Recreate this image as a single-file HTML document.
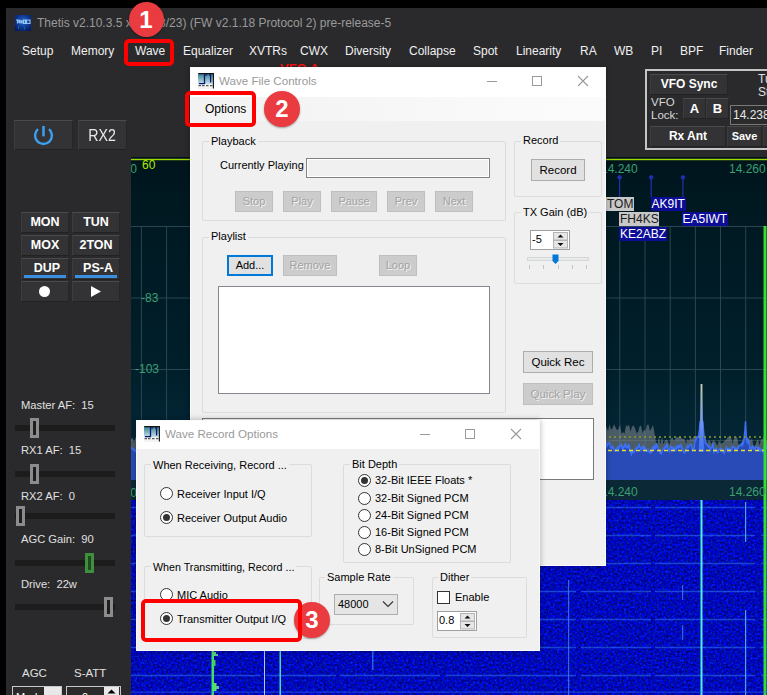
<!DOCTYPE html>
<html><head><meta charset="utf-8">
<style>
*{box-sizing:border-box}
html,body{margin:0;padding:0}
body{width:767px;height:695px;background:#000;position:relative;overflow:hidden;font-family:"Liberation Sans",sans-serif}
.a{position:absolute}
.w{color:#fff;white-space:nowrap}
.mn{position:absolute;top:43.5px;font-size:12px;color:#f0f0f0;white-space:nowrap;line-height:14px}
.btn{position:absolute;background:#333335;border-top:1px solid #4a4a4a;border-left:1px solid #3c3c3c;border-right:1px solid #262626;border-bottom:1px solid #222;color:#fff;font-weight:bold;font-size:12.5px;text-align:center;white-space:nowrap}
.lbl{position:absolute;color:#e0e0e0;font-size:11.2px;white-space:nowrap;line-height:14px}
.trk{position:absolute;left:15px;width:100px;height:6px;background:#1c1c1c}
.thm{position:absolute;width:9px;height:20px;background:#8c8c8c;border:3px solid #8c8c8c;border-left-width:3px;border-right-width:3px}
.thm i{display:block;width:3px;height:14px;background:#1e1e1e}
/* dialogs */
.dlg{position:absolute;background:#f0f0f0;border:1px solid #fafafa;box-shadow:0 0 6px rgba(0,0,0,.3)}
.dt{position:absolute;font-size:11.6px;color:#9a9a9a;white-space:nowrap}
.gb{position:absolute;border:1px solid #dcdcdc;border-radius:2px}
.gl{position:absolute;background:#f0f0f0;font-size:11px;color:#000;padding:0 2px;white-space:nowrap;line-height:13px}
.tx{position:absolute;font-size:11px;color:#000;white-space:nowrap;line-height:13px}
.pb{position:absolute;background:#e1e1e1;border:1px solid #adadad;font-size:11px;color:#000;text-align:center;white-space:nowrap}
.pbd{position:absolute;background:#cccccc;border:1px solid #bfbfbf;font-size:11px;color:#a3a3a3;text-align:center;white-space:nowrap;text-shadow:1px 1px 0 #f4f4f4}
.rd{position:absolute;width:13px;height:13px;border:1px solid #333;border-radius:50%;background:#fff}
.rd.on::after{content:"";position:absolute;left:2px;top:2px;width:7px;height:7px;border-radius:50%;background:#333}
.redbox{position:absolute;border:4px solid #ff0000;border-radius:5px}
.circ{position:absolute;width:36px;height:36px;border-radius:50%;background:#e93b40;color:#fff;font-weight:bold;font-size:24px;text-align:center;line-height:36px;box-shadow:0 1px 2px rgba(0,0,0,.35)}
</style></head>
<body>
<!-- main window -->
<div class="a" style="left:6px;top:8px;width:761px;height:687px;background:#2a2a2c"></div>
<!-- title icon -->
<svg class="a" style="left:15px;top:15px" width="16" height="16" viewBox="0 0 16 16"><defs><radialGradient id="tg" cx="0.5" cy="0.4" r="0.7"><stop offset="0" stop-color="#2a6ac8"/><stop offset="0.6" stop-color="#0c3490"/><stop offset="1" stop-color="#041a60"/></radialGradient></defs><rect width="16" height="16" fill="url(#tg)"/><path d="M1 5 H4 V8 M2.5 5 V8.5 M5 5 V8.5 M5 6.8 H7 M7 5 V8.5 M8.5 5 H10.5 V8.5 H8.5 Z M11.5 5 H15 V8.5 H11.5 Z" stroke="#9fd0ff" stroke-width="1.2" fill="none" opacity="0.9"/><rect x="3" y="11" width="1" height="3" fill="#2a8a6a" opacity=".6"/><rect x="9" y="12" width="1" height="2.5" fill="#2a8a6a" opacity=".6"/></svg>

<div class="a" style="left:37px;top:15px;font-size:12px;color:#9a9a9a;white-space:nowrap;line-height:16px">Thetis v2.10.3.5 x64 (08/23) (FW v2.1.18 Protocol 2) pre-release-5</div>
<!-- menu -->
<div class="mn" style="left:22px">Setup</div>
<div class="mn" style="left:71px">Memory</div>
<div class="mn" style="left:135px">Wave</div>
<div class="mn" style="left:183px">Equalizer</div>
<div class="mn" style="left:249px">XVTRs</div>
<div class="mn" style="left:300px">CWX</div>
<div class="mn" style="left:345px">Diversity</div>
<div class="mn" style="left:409px">Collapse</div>
<div class="mn" style="left:473px">Spot</div>
<div class="mn" style="left:516px">Linearity</div>
<div class="mn" style="left:580px">RA</div>
<div class="mn" style="left:614px">WB</div>
<div class="mn" style="left:651px">PI</div>
<div class="mn" style="left:680px">BPF</div>
<div class="mn" style="left:719px">Finder</div>

<!-- left panel buttons -->
<div class="btn" style="left:14px;top:120px;width:59px;height:30px"></div>
<svg class="a" style="left:32px;top:123px" width="23" height="23" viewBox="0 0 21 21"><path d="M5.45 5.6 A7.7 7.7 0 1 0 15.55 5.6" fill="none" stroke="#3c9ff0" stroke-width="2.2"/><line x1="10.5" y1="2.7" x2="10.5" y2="12.2" stroke="#3c9ff0" stroke-width="2.3"/></svg>
<div class="btn" style="left:78px;top:120px;width:49px;height:30px;font-weight:normal;font-size:16.5px;line-height:28px;color:#e8e8e8"><span style="display:inline-block;transform:scaleX(0.86)">RX2</span></div>

<div class="btn" style="left:21px;top:212px;width:48px;height:21px;line-height:19px">MON</div>
<div class="btn" style="left:72px;top:212px;width:48px;height:21px;line-height:19px">TUN</div>
<div class="btn" style="left:21px;top:235px;width:48px;height:21px;line-height:19px">MOX</div>
<div class="btn" style="left:72px;top:235px;width:48px;height:21px;line-height:19px">2TON</div>
<div class="btn" style="left:21px;top:258px;width:48px;height:22px;line-height:19px;padding-left:4px">DUP</div>
<div class="btn" style="left:72px;top:258px;width:48px;height:22px;line-height:19px;padding-left:4px">PS-A</div>
<div class="a" style="left:24px;top:275px;width:42px;height:3px;background:#3a8fe0"></div>
<div class="a" style="left:75px;top:275px;width:42px;height:3px;background:#3a8fe0"></div>
<div class="btn" style="left:21px;top:281px;width:48px;height:21px"></div>
<div class="btn" style="left:72px;top:281px;width:48px;height:21px"></div>
<div class="a" style="left:39px;top:286px;width:11px;height:11px;border-radius:50%;background:#fff"></div>
<svg class="a" style="left:90px;top:285px" width="12" height="13"><path d="M1 1 L11 6.5 L1 12 Z" fill="#fff"/></svg>

<!-- sliders -->
<div class="lbl" style="left:21px;top:398px">Master AF:&nbsp; 15</div>
<div class="trk" style="top:425px"></div>
<div class="thm" style="left:30px;top:418px"><i></i></div>
<div class="lbl" style="left:21px;top:443px">RX1 AF:&nbsp; 15</div>
<div class="trk" style="top:471px"></div>
<div class="thm" style="left:30px;top:464px"><i></i></div>
<div class="lbl" style="left:21px;top:489px">RX2 AF:&nbsp; 0</div>
<div class="trk" style="top:513px"></div>
<div class="thm" style="left:16px;top:506px"><i></i></div>
<div class="lbl" style="left:21px;top:532px">AGC Gain:&nbsp; 90</div>
<div class="trk" style="top:560px"></div>
<div class="thm" style="left:85px;top:553px;background:#3f8f3f;border-color:#3f8f3f"><i style="background:#1e4a1e"></i></div>
<div class="lbl" style="left:21px;top:577px">Drive:&nbsp; 22w</div>
<div class="trk" style="top:604px"></div>
<div class="thm" style="left:104px;top:597px"><i></i></div>
<div class="lbl" style="left:22px;top:666px;font-size:11.5px">AGC</div>
<div class="lbl" style="left:74px;top:666px;font-size:11.5px">S-ATT</div>
<div class="a" style="left:12px;top:686px;width:50px;height:12px;background:#e8e8e8;border:1px solid #c8c8c8"></div>
<div class="a" style="left:13px;top:687px;width:31px;height:10px;background:#2b2b2b;color:#fff;font-size:11px;line-height:20px;padding-left:3px;overflow:hidden">Mode</div>
<div class="a" style="left:66px;top:686px;width:55px;height:12px;background:#2b2b2b;border:1px solid #c8c8c8"></div>
<div class="a" style="left:82px;top:687px;color:#fff;font-size:11px;line-height:20px">0</div>
<div class="a" style="left:104px;top:687px;width:15px;height:10px;background:#e8e8e8"></div><svg class="a" style="left:106px;top:688px" width="11" height="6"><path d="M1.5 5.5 L5.5 1.5 L9.5 5.5Z" fill="#000"/></svg>

<!--vfo--><!-- VFO panel -->
<div class="a" style="left:645px;top:69px;width:130px;height:81px;border:2px solid #c4c4c4;border-right:none"></div>
<div class="btn" style="left:650px;top:74px;width:78px;height:21px;line-height:19px;font-size:12px">VFO Sync</div>
<div class="a" style="left:651px;top:96px;color:#d8d8d8;font-size:11.5px;line-height:13px;white-space:nowrap">VFO<br>Lock:</div>
<div class="btn" style="left:683px;top:98px;width:23px;height:21px;line-height:19px;font-size:13px">A</div>
<div class="btn" style="left:706px;top:98px;width:23px;height:21px;line-height:19px;font-size:13px">B</div>
<div class="a" style="left:730px;top:105px;width:40px;height:20px;background:#2b2b2b;border:1px solid #7a7a7a;border-right:none;color:#e8e8e8;font-size:12px;line-height:18px;padding-left:2px;white-space:nowrap;overflow:hidden">14.2380</div>
<div class="btn" style="left:650px;top:126px;width:76px;height:21px;line-height:19px;font-size:12px">Rx Ant</div>
<div class="btn" style="left:727px;top:126px;width:35px;height:21px;line-height:19px;font-size:11px">Save</div>
<div class="btn" style="left:763px;top:126px;width:10px;height:21px"></div>
<div class="a" style="left:758px;top:73px;color:#e0e0e0;font-size:12px;line-height:12.5px;white-space:nowrap">Tu<br>St</div>
<!--endvfo-->
<div id="pan"><div class="a" style="left:131px;top:157px;width:636px;height:323px;background:linear-gradient(#00141c,#001820 12%,#001f2b 65%,#062a3a 100%)"></div>
<div class="a" style="left:131px;top:480px;width:636px;height:20px;background:#0b2836"></div>
<svg class="a" style="left:0;top:0" width="767" height="695" viewBox="0 0 767 695">
<rect x="131" y="158.8" width="636" height="1.4" fill="#a0d800"/>
<rect x="131" y="226" width="636" height="1" fill="#2e4a56" opacity="0.9"/>
<rect x="131" y="297.5" width="636" height="1" fill="#2e4a56" opacity="0.9"/>
<rect x="131" y="369" width="636" height="1" fill="#2e4a56" opacity="0.9"/>
<rect x="131" y="440" width="636" height="1" fill="#2e4a56" opacity="0.9"/>
<rect x="140.9" y="226" width="1" height="254" fill="#2e4a56" opacity="0.9"/>
<rect x="166.1" y="226" width="1" height="254" fill="#2e4a56" opacity="0.9"/>
<rect x="191.3" y="226" width="1" height="254" fill="#2e4a56" opacity="0.9"/>
<rect x="216.4" y="226" width="1" height="254" fill="#2e4a56" opacity="0.9"/>
<rect x="241.6" y="226" width="1" height="254" fill="#2e4a56" opacity="0.9"/>
<rect x="266.8" y="226" width="1" height="254" fill="#2e4a56" opacity="0.9"/>
<rect x="292.0" y="226" width="1" height="254" fill="#2e4a56" opacity="0.9"/>
<rect x="317.2" y="226" width="1" height="254" fill="#2e4a56" opacity="0.9"/>
<rect x="342.3" y="226" width="1" height="254" fill="#2e4a56" opacity="0.9"/>
<rect x="367.5" y="226" width="1" height="254" fill="#2e4a56" opacity="0.9"/>
<rect x="392.7" y="226" width="1" height="254" fill="#2e4a56" opacity="0.9"/>
<rect x="417.9" y="226" width="1" height="254" fill="#2e4a56" opacity="0.9"/>
<rect x="443.1" y="226" width="1" height="254" fill="#2e4a56" opacity="0.9"/>
<rect x="468.2" y="226" width="1" height="254" fill="#2e4a56" opacity="0.9"/>
<rect x="493.4" y="226" width="1" height="254" fill="#2e4a56" opacity="0.9"/>
<rect x="518.6" y="226" width="1" height="254" fill="#2e4a56" opacity="0.9"/>
<rect x="543.8" y="226" width="1" height="254" fill="#2e4a56" opacity="0.9"/>
<rect x="569.0" y="226" width="1" height="254" fill="#2e4a56" opacity="0.9"/>
<rect x="594.1" y="226" width="1" height="254" fill="#2e4a56" opacity="0.9"/>
<rect x="619.3" y="226" width="1" height="254" fill="#2e4a56" opacity="0.9"/>
<rect x="644.5" y="226" width="1" height="254" fill="#2e4a56" opacity="0.9"/>
<rect x="669.7" y="226" width="1" height="254" fill="#2e4a56" opacity="0.9"/>
<rect x="694.9" y="226" width="1" height="254" fill="#2e4a56" opacity="0.9"/>
<rect x="720.0" y="226" width="1" height="254" fill="#2e4a56" opacity="0.9"/>
<rect x="745.2" y="226" width="1" height="254" fill="#2e4a56" opacity="0.9"/>
<path d="M131 480 L131 439.2 L132.5 437.5 L134.0 442.5 L135.5 436.7 L137.0 441.4 L138.5 439.7 L140.0 436.6 L141.5 441.1 L143.0 436.4 L144.5 440.3 L146.0 436.7 L147.5 436.9 L149.0 440.2 L150.5 444.3 L152.0 437.2 L153.5 438.2 L155.0 442.3 L156.5 445.5 L158.0 441.8 L159.5 440.0 L161.0 445.8 L162.5 436.5 L164.0 444.6 L165.5 438.9 L167.0 437.4 L168.5 437.2 L170.0 439.1 L171.5 444.2 L173.0 437.8 L174.5 441.8 L176.0 442.4 L177.5 439.7 L179.0 441.5 L180.5 436.6 L182.0 436.6 L183.5 438.1 L185.0 442.8 L186.5 440.3 L188.0 439.1 L189.5 441.9 L191.0 440.5 L192.5 439.0 L194.0 443.9 L195.5 443.0 L197.0 438.4 L198.5 441.7 L200.0 436.3 L201.5 439.8 L203.0 438.3 L204.5 433.9 L206.0 440.8 L207.5 432.2 L209.0 435.2 L210.5 438.6 L212.0 432.5 L213.5 435.9 L215.0 431.4 L216.5 437.7 L218.0 438.6 L219.5 436.7 L221.0 439.8 L222.5 434.1 L224.0 438.0 L225.5 436.9 L227.0 436.8 L228.5 435.6 L230.0 439.4 L231.5 440.4 L233.0 435.7 L234.5 437.6 L236.0 431.6 L237.5 438.0 L239.0 437.5 L240.5 440.9 L242.0 439.2 L243.5 433.8 L245.0 434.9 L246.5 437.7 L248.0 431.2 L249.5 435.6 L251.0 432.7 L252.5 432.2 L254.0 431.6 L255.5 438.7 L257.0 432.3 L258.5 433.5 L260.0 434.9 L261.5 439.7 L263.0 431.8 L264.5 435.5 L266.0 436.5 L267.5 439.8 L269.0 439.2 L270.5 439.6 L272.0 433.8 L273.5 435.2 L275.0 434.6 L276.5 439.8 L278.0 440.6 L279.5 432.5 L281.0 432.8 L282.5 433.3 L284.0 433.3 L285.5 435.8 L287.0 436.9 L288.5 433.6 L290.0 431.0 L291.5 435.2 L293.0 434.7 L294.5 436.7 L296.0 440.5 L297.5 437.9 L299.0 436.2 L300.5 437.2 L302.0 437.8 L303.5 431.5 L305.0 440.0 L306.5 438.8 L308.0 439.7 L309.5 439.0 L311.0 434.9 L312.5 435.0 L314.0 432.0 L315.5 437.3 L317.0 431.6 L318.5 431.7 L320.0 433.1 L321.5 432.6 L323.0 434.4 L324.5 431.5 L326.0 431.0 L327.5 432.5 L329.0 432.0 L330.5 434.6 L332.0 431.3 L333.5 439.7 L335.0 437.1 L336.5 432.5 L338.0 433.5 L339.5 434.5 L341.0 434.6 L342.5 432.2 L344.0 439.5 L345.5 440.9 L347.0 435.7 L348.5 435.8 L350.0 431.9 L351.5 432.0 L353.0 434.4 L354.5 433.6 L356.0 439.3 L357.5 432.6 L359.0 431.2 L360.5 440.5 L362.0 436.3 L363.5 432.5 L365.0 436.4 L366.5 431.3 L368.0 436.3 L369.5 440.8 L371.0 439.6 L372.5 438.0 L374.0 433.6 L375.5 434.7 L377.0 432.7 L378.5 438.7 L380.0 436.3 L381.5 438.8 L383.0 434.3 L384.5 433.2 L386.0 439.1 L387.5 440.8 L389.0 439.5 L390.5 439.1 L392.0 439.2 L393.5 438.4 L395.0 433.3 L396.5 436.2 L398.0 434.6 L399.5 431.3 L401.0 431.3 L402.5 433.8 L404.0 433.6 L405.5 437.9 L407.0 440.6 L408.5 435.5 L410.0 440.4 L411.5 440.9 L413.0 440.6 L414.5 434.6 L416.0 433.2 L417.5 433.3 L419.0 433.0 L420.5 433.0 L422.0 437.2 L423.5 440.0 L425.0 439.4 L426.5 435.8 L428.0 437.5 L429.5 439.0 L431.0 431.8 L432.5 437.6 L434.0 440.1 L435.5 438.8 L437.0 438.5 L438.5 435.8 L440.0 432.8 L441.5 438.9 L443.0 434.3 L444.5 439.0 L446.0 440.7 L447.5 435.0 L449.0 435.0 L450.5 440.5 L452.0 438.2 L453.5 432.7 L455.0 432.3 L456.5 432.5 L458.0 440.0 L459.5 439.1 L461.0 432.5 L462.5 439.3 L464.0 440.8 L465.5 437.6 L467.0 434.5 L468.5 436.5 L470.0 432.3 L471.5 431.1 L473.0 440.7 L474.5 437.5 L476.0 436.3 L477.5 440.3 L479.0 435.3 L480.5 439.7 L482.0 439.3 L483.5 433.1 L485.0 433.5 L486.5 433.9 L488.0 433.4 L489.5 436.9 L491.0 433.6 L492.5 435.2 L494.0 432.3 L495.5 440.1 L497.0 434.5 L498.5 435.6 L500.0 436.8 L501.5 440.0 L503.0 435.2 L504.5 440.2 L506.0 436.0 L507.5 436.3 L509.0 436.2 L510.5 431.2 L512.0 435.4 L513.5 432.8 L515.0 431.0 L516.5 439.0 L518.0 432.7 L519.5 435.7 L521.0 438.3 L522.5 436.6 L524.0 434.3 L525.5 436.2 L527.0 436.6 L528.5 438.8 L530.0 432.1 L531.5 436.6 L533.0 433.5 L534.5 433.8 L536.0 438.7 L537.5 436.1 L539.0 436.6 L540.5 438.6 L542.0 440.1 L543.5 435.4 L545.0 437.1 L546.5 436.1 L548.0 436.1 L549.5 437.9 L551.0 435.5 L552.5 436.3 L554.0 435.8 L555.5 440.4 L557.0 438.0 L558.5 439.8 L560.0 433.4 L561.5 426.6 L563.0 429.6 L564.5 433.4 L566.0 432.4 L567.5 425.4 L569.0 425.2 L570.5 428.4 L572.0 424.7 L573.5 426.4 L575.0 424.7 L576.5 430.7 L578.0 431.8 L579.5 433.0 L581.0 425.5 L582.5 431.2 L584.0 430.6 L585.5 425.4 L587.0 432.8 L588.5 433.7 L590.0 426.2 L591.5 433.5 L593.0 428.0 L594.5 428.9 L596.0 433.9 L597.5 432.3 L599.0 425.6 L600.5 428.3 L602.0 429.2 L603.5 427.4 L605.0 426.0 L606.5 427.2 L608.0 431.2 L609.5 424.2 L611.0 429.5 L612.5 428.4 L614.0 424.2 L615.5 427.3 L617.0 430.2 L618.5 429.1 L620.0 424.6 L621.5 433.9 L623.0 431.9 L624.5 433.7 L626.0 425.0 L627.5 426.7 L629.0 424.4 L630.5 431.8 L632.0 426.7 L633.5 425.3 L635.0 428.2 L636.5 433.1 L638.0 432.2 L639.5 426.6 L641.0 425.5 L642.5 433.2 L644.0 429.7 L645.5 431.0 L647.0 424.9 L648.5 424.6 L650.0 430.9 L651.5 428.3 L653.0 424.7 L654.5 433.4 L656.0 442.3 L657.5 444.0 L659.0 436.8 L660.5 444.6 L662.0 436.7 L663.5 444.6 L665.0 440.5 L666.5 439.4 L668.0 441.5 L669.5 445.3 L671.0 438.7 L672.5 437.3 L674.0 441.3 L675.5 438.4 L677.0 437.1 L678.5 437.6 L680.0 436.5 L681.5 438.0 L683.0 439.1 L684.5 439.1 L686.0 443.6 L687.5 438.9 L689.0 441.0 L690.5 437.8 L692.0 439.5 L693.5 436.2 L695.0 438.5 L696.5 436.2 L698.0 443.3 L699.5 441.5 L701.0 437.9 L702.5 440.7 L704.0 445.3 L705.5 437.1 L707.0 444.2 L708.5 440.3 L710.0 441.0 L711.5 444.3 L713.0 439.9 L714.5 441.1 L716.0 442.9 L717.5 445.8 L719.0 439.4 L720.5 444.3 L722.0 443.1 L723.5 442.4 L725.0 440.0 L726.5 439.5 L728.0 436.5 L729.5 437.3 L731.0 436.7 L732.5 443.4 L734.0 438.6 L735.5 437.6 L737.0 436.8 L738.5 444.4 L740.0 444.7 L741.5 442.7 L743.0 438.8 L744.5 438.4 L746.0 438.9 L747.5 440.6 L749.0 437.6 L750.5 440.5 L752.0 438.6 L753.5 445.6 L755.0 445.7 L756.5 441.5 L758.0 438.4 L759.5 445.7 L761.0 439.1 L762.5 439.6 L764.0 436.0 L765.5 439.8 L767.0 440.7 L767 480 Z" fill="#7a8288" opacity="0.6"/>
<path d="M131 480 L131.0 447.4 L131.5 447.8 L132.0 448.0 L132.5 449.3 L133.0 449.1 L133.5 449.4 L134.0 450.4 L134.5 450.6 L135.0 450.3 L135.5 452.1 L136.0 449.9 L136.5 448.6 L137.0 447.4 L137.5 445.6 L138.0 444.9 L138.5 446.0 L139.0 444.8 L139.5 448.9 L140.0 451.7 L140.5 452.4 L141.0 453.0 L141.5 454.3 L142.0 452.5 L142.5 449.2 L143.0 446.3 L143.5 445.1 L144.0 445.6 L144.5 443.7 L145.0 444.5 L145.5 445.6 L146.0 448.1 L146.5 446.0 L147.0 447.4 L147.5 447.3 L148.0 449.0 L148.5 446.7 L149.0 448.3 L149.5 446.8 L150.0 448.8 L150.5 447.5 L151.0 448.3 L151.5 449.0 L152.0 450.6 L152.5 448.7 L153.0 447.4 L153.5 446.5 L154.0 445.5 L154.5 443.5 L155.0 446.9 L155.5 448.1 L156.0 449.3 L156.5 448.5 L157.0 448.0 L157.5 445.5 L158.0 447.3 L158.5 448.1 L159.0 449.5 L159.5 451.7 L160.0 451.9 L160.5 452.0 L161.0 451.8 L161.5 453.7 L162.0 454.6 L162.5 454.5 L163.0 451.6 L163.5 452.0 L164.0 449.3 L164.5 446.0 L165.0 444.9 L165.5 444.8 L166.0 444.5 L166.5 445.6 L167.0 447.4 L167.5 450.7 L168.0 451.3 L168.5 452.2 L169.0 452.3 L169.5 452.4 L170.0 450.2 L170.5 452.5 L171.0 450.4 L171.5 448.3 L172.0 447.9 L172.5 449.5 L173.0 446.4 L173.5 447.3 L174.0 450.9 L174.5 453.0 L175.0 452.6 L175.5 457.1 L176.0 457.0 L176.5 455.0 L177.0 451.2 L177.5 450.7 L178.0 448.8 L178.5 448.4 L179.0 448.3 L179.5 451.3 L180.0 451.5 L180.5 450.0 L181.0 449.6 L181.5 449.4 L182.0 445.7 L182.5 444.4 L183.0 446.2 L183.5 448.4 L184.0 446.3 L184.5 449.1 L185.0 449.2 L185.5 446.9 L186.0 446.4 L186.5 448.1 L187.0 448.3 L187.5 448.6 L188.0 448.1 L188.5 447.0 L189.0 447.7 L189.5 448.2 L190.0 447.6 L190.5 449.8 L191.0 449.7 L191.5 449.9 L192.0 449.3 L192.5 447.6 L193.0 448.7 L193.5 450.5 L194.0 450.0 L194.5 447.5 L195.0 449.5 L195.5 448.6 L196.0 443.3 L196.5 446.6 L197.0 448.2 L197.5 447.9 L198.0 445.9 L198.5 449.7 L199.0 447.5 L199.5 448.6 L200.0 449.8 L200.5 449.8 L201.0 450.2 L201.5 449.3 L202.0 449.0 L202.5 449.9 L203.0 451.2 L203.5 451.4 L204.0 454.2 L204.5 453.7 L205.0 452.9 L205.5 450.9 L206.0 452.2 L206.5 448.4 L207.0 447.2 L207.5 446.0 L208.0 449.4 L208.5 447.6 L209.0 447.1 L209.5 449.6 L210.0 449.5 L210.5 446.9 L211.0 448.9 L211.5 451.7 L212.0 452.0 L212.5 453.6 L213.0 453.8 L213.5 452.0 L214.0 451.0 L214.5 446.8 L215.0 445.7 L215.5 448.0 L216.0 446.7 L216.5 448.3 L217.0 451.0 L217.5 451.6 L218.0 450.3 L218.5 451.5 L219.0 451.2 L219.5 451.0 L220.0 451.0 L220.5 453.1 L221.0 453.8 L221.5 452.6 L222.0 453.8 L222.5 454.0 L223.0 452.3 L223.5 451.6 L224.0 452.4 L224.5 452.3 L225.0 451.7 L225.5 452.3 L226.0 453.2 L226.5 451.2 L227.0 449.6 L227.5 450.4 L228.0 447.7 L228.5 446.0 L229.0 447.0 L229.5 448.5 L230.0 447.3 L230.5 451.5 L231.0 452.7 L231.5 453.9 L232.0 451.9 L232.5 450.7 L233.0 447.8 L233.5 447.8 L234.0 446.8 L234.5 449.6 L235.0 448.6 L235.5 449.3 L236.0 449.8 L236.5 447.8 L237.0 446.9 L237.5 449.8 L238.0 448.1 L238.5 444.3 L239.0 444.7 L239.5 444.6 L240.0 445.8 L240.5 446.4 L241.0 450.9 L241.5 451.5 L242.0 453.2 L242.5 449.5 L243.0 449.5 L243.5 448.0 L244.0 449.9 L244.5 449.1 L245.0 450.4 L245.5 447.8 L246.0 446.9 L246.5 444.4 L247.0 443.3 L247.5 443.2 L248.0 445.5 L248.5 445.7 L249.0 447.5 L249.5 446.6 L250.0 449.4 L250.5 448.9 L251.0 448.8 L251.5 449.2 L252.0 450.0 L252.5 450.2 L253.0 450.9 L253.5 450.5 L254.0 451.3 L254.5 451.9 L255.0 449.2 L255.5 448.8 L256.0 449.6 L256.5 449.9 L257.0 450.3 L257.5 451.4 L258.0 449.0 L258.5 449.5 L259.0 446.4 L259.5 443.4 L260.0 442.4 L260.5 445.5 L261.0 444.8 L261.5 449.4 L262.0 451.1 L262.5 451.0 L263.0 452.2 L263.5 452.4 L264.0 448.7 L264.5 447.9 L265.0 448.8 L265.5 449.2 L266.0 449.8 L266.5 450.0 L267.0 452.1 L267.5 452.5 L268.0 449.1 L268.5 449.2 L269.0 450.3 L269.5 451.2 L270.0 450.9 L270.5 451.1 L271.0 451.1 L271.5 453.4 L272.0 450.6 L272.5 452.7 L273.0 454.3 L273.5 454.2 L274.0 451.2 L274.5 451.1 L275.0 450.4 L275.5 449.8 L276.0 449.3 L276.5 450.0 L277.0 449.5 L277.5 449.0 L278.0 450.1 L278.5 449.6 L279.0 448.1 L279.5 450.2 L280.0 449.9 L280.5 449.2 L281.0 449.8 L281.5 450.6 L282.0 448.1 L282.5 449.0 L283.0 450.6 L283.5 448.9 L284.0 451.5 L284.5 453.5 L285.0 451.5 L285.5 450.7 L286.0 453.9 L286.5 450.3 L287.0 452.1 L287.5 452.8 L288.0 451.3 L288.5 450.3 L289.0 450.7 L289.5 449.6 L290.0 450.2 L290.5 451.1 L291.0 448.5 L291.5 451.3 L292.0 452.8 L292.5 454.0 L293.0 454.3 L293.5 457.2 L294.0 455.7 L294.5 451.5 L295.0 449.0 L295.5 448.9 L296.0 446.6 L296.5 445.9 L297.0 448.5 L297.5 448.5 L298.0 446.7 L298.5 449.7 L299.0 450.8 L299.5 450.3 L300.0 451.5 L300.5 451.3 L301.0 449.6 L301.5 448.5 L302.0 450.8 L302.5 451.0 L303.0 452.8 L303.5 454.5 L304.0 455.3 L304.5 452.2 L305.0 450.7 L305.5 453.8 L306.0 451.1 L306.5 449.6 L307.0 450.0 L307.5 449.4 L308.0 446.4 L308.5 447.2 L309.0 447.9 L309.5 445.5 L310.0 444.6 L310.5 442.5 L311.0 443.2 L311.5 443.3 L312.0 443.0 L312.5 445.4 L313.0 448.6 L313.5 447.4 L314.0 447.3 L314.5 451.5 L315.0 448.3 L315.5 447.3 L316.0 448.5 L316.5 450.5 L317.0 449.1 L317.5 449.6 L318.0 449.7 L318.5 447.2 L319.0 444.7 L319.5 445.8 L320.0 446.7 L320.5 448.1 L321.0 450.4 L321.5 451.3 L322.0 450.3 L322.5 450.8 L323.0 449.5 L323.5 448.9 L324.0 447.5 L324.5 447.2 L325.0 450.5 L325.5 449.9 L326.0 450.7 L326.5 451.7 L327.0 452.5 L327.5 450.3 L328.0 448.7 L328.5 447.8 L329.0 447.0 L329.5 446.9 L330.0 445.1 L330.5 447.9 L331.0 446.9 L331.5 446.0 L332.0 446.7 L332.5 446.7 L333.0 447.5 L333.5 450.0 L334.0 451.4 L334.5 451.9 L335.0 452.0 L335.5 451.7 L336.0 450.4 L336.5 451.7 L337.0 450.2 L337.5 452.3 L338.0 452.0 L338.5 450.7 L339.0 449.3 L339.5 450.3 L340.0 451.1 L340.5 449.8 L341.0 451.1 L341.5 453.8 L342.0 450.7 L342.5 446.2 L343.0 447.4 L343.5 447.9 L344.0 446.7 L344.5 446.8 L345.0 450.1 L345.5 448.8 L346.0 447.8 L346.5 447.5 L347.0 450.7 L347.5 453.4 L348.0 451.2 L348.5 450.0 L349.0 447.7 L349.5 448.3 L350.0 444.4 L350.5 447.1 L351.0 449.0 L351.5 447.8 L352.0 447.3 L352.5 449.2 L353.0 448.3 L353.5 447.2 L354.0 449.6 L354.5 448.8 L355.0 448.1 L355.5 449.6 L356.0 448.8 L356.5 448.2 L357.0 447.8 L357.5 447.7 L358.0 446.0 L358.5 449.0 L359.0 450.4 L359.5 451.3 L360.0 451.7 L360.5 454.6 L361.0 452.6 L361.5 452.1 L362.0 452.1 L362.5 452.2 L363.0 448.5 L363.5 448.4 L364.0 449.1 L364.5 448.5 L365.0 447.4 L365.5 447.9 L366.0 448.2 L366.5 448.6 L367.0 449.2 L367.5 449.3 L368.0 449.5 L368.5 449.2 L369.0 446.1 L369.5 446.3 L370.0 447.8 L370.5 448.8 L371.0 449.9 L371.5 453.8 L372.0 452.6 L372.5 451.6 L373.0 452.7 L373.5 451.3 L374.0 450.0 L374.5 448.8 L375.0 449.7 L375.5 447.8 L376.0 448.6 L376.5 448.3 L377.0 447.8 L377.5 446.2 L378.0 447.5 L378.5 447.2 L379.0 446.2 L379.5 447.0 L380.0 446.9 L380.5 446.4 L381.0 446.4 L381.5 448.6 L382.0 449.9 L382.5 450.4 L383.0 448.2 L383.5 448.6 L384.0 448.0 L384.5 447.3 L385.0 449.6 L385.5 453.8 L386.0 455.0 L386.5 454.0 L387.0 456.8 L387.5 455.7 L388.0 451.7 L388.5 452.0 L389.0 450.6 L389.5 446.4 L390.0 446.7 L390.5 450.4 L391.0 449.0 L391.5 451.8 L392.0 454.6 L392.5 451.6 L393.0 450.2 L393.5 450.7 L394.0 448.4 L394.5 447.9 L395.0 449.3 L395.5 449.4 L396.0 448.7 L396.5 451.8 L397.0 451.2 L397.5 451.4 L398.0 449.2 L398.5 448.4 L399.0 448.7 L399.5 448.9 L400.0 450.3 L400.5 453.3 L401.0 452.5 L401.5 449.7 L402.0 448.7 L402.5 448.7 L403.0 446.5 L403.5 447.5 L404.0 447.3 L404.5 446.6 L405.0 445.2 L405.5 446.4 L406.0 446.0 L406.5 445.8 L407.0 447.1 L407.5 449.3 L408.0 449.5 L408.5 449.2 L409.0 450.7 L409.5 451.8 L410.0 450.2 L410.5 450.4 L411.0 451.2 L411.5 450.9 L412.0 448.3 L412.5 448.3 L413.0 449.6 L413.5 450.5 L414.0 452.0 L414.5 454.3 L415.0 454.0 L415.5 450.9 L416.0 451.8 L416.5 450.6 L417.0 447.5 L417.5 449.3 L418.0 452.3 L418.5 452.7 L419.0 454.2 L419.5 456.3 L420.0 454.6 L420.5 452.3 L421.0 451.9 L421.5 449.8 L422.0 452.4 L422.5 451.4 L423.0 453.2 L423.5 453.6 L424.0 454.2 L424.5 451.4 L425.0 450.9 L425.5 451.5 L426.0 451.0 L426.5 452.8 L427.0 452.6 L427.5 456.0 L428.0 455.2 L428.5 455.0 L429.0 453.5 L429.5 453.5 L430.0 451.2 L430.5 451.7 L431.0 450.5 L431.5 450.1 L432.0 450.8 L432.5 451.5 L433.0 451.8 L433.5 451.2 L434.0 451.5 L434.5 450.7 L435.0 450.2 L435.5 448.0 L436.0 447.0 L436.5 446.1 L437.0 445.0 L437.5 446.7 L438.0 445.8 L438.5 447.0 L439.0 447.7 L439.5 448.9 L440.0 448.7 L440.5 450.1 L441.0 449.0 L441.5 449.9 L442.0 449.9 L442.5 451.9 L443.0 450.9 L443.5 452.1 L444.0 450.9 L444.5 449.9 L445.0 447.2 L445.5 450.0 L446.0 452.6 L446.5 453.1 L447.0 454.4 L447.5 455.2 L448.0 455.0 L448.5 452.8 L449.0 451.6 L449.5 450.7 L450.0 449.3 L450.5 447.7 L451.0 448.9 L451.5 450.7 L452.0 450.3 L452.5 450.6 L453.0 451.1 L453.5 449.7 L454.0 448.6 L454.5 451.7 L455.0 451.2 L455.5 450.7 L456.0 450.7 L456.5 450.9 L457.0 448.7 L457.5 449.2 L458.0 447.9 L458.5 447.4 L459.0 447.4 L459.5 449.6 L460.0 448.3 L460.5 449.7 L461.0 451.4 L461.5 450.6 L462.0 449.3 L462.5 450.3 L463.0 448.7 L463.5 446.0 L464.0 446.6 L464.5 445.1 L465.0 444.6 L465.5 446.4 L466.0 447.3 L466.5 445.8 L467.0 446.0 L467.5 447.4 L468.0 444.6 L468.5 446.5 L469.0 447.6 L469.5 447.7 L470.0 446.6 L470.5 449.1 L471.0 446.9 L471.5 446.7 L472.0 447.7 L472.5 447.8 L473.0 448.0 L473.5 449.1 L474.0 446.6 L474.5 445.7 L475.0 445.7 L475.5 446.3 L476.0 445.4 L476.5 447.2 L477.0 446.7 L477.5 444.5 L478.0 444.4 L478.5 446.4 L479.0 447.2 L479.5 448.9 L480.0 452.2 L480.5 450.4 L481.0 449.5 L481.5 449.5 L482.0 450.2 L482.5 447.0 L483.0 446.4 L483.5 446.8 L484.0 446.1 L484.5 445.3 L485.0 447.6 L485.5 450.1 L486.0 450.7 L486.5 451.8 L487.0 451.5 L487.5 449.0 L488.0 449.5 L488.5 446.9 L489.0 446.5 L489.5 448.0 L490.0 447.9 L490.5 447.7 L491.0 448.3 L491.5 448.3 L492.0 444.9 L492.5 444.4 L493.0 444.1 L493.5 447.4 L494.0 448.5 L494.5 450.5 L495.0 453.1 L495.5 454.6 L496.0 454.0 L496.5 452.4 L497.0 451.2 L497.5 453.2 L498.0 450.8 L498.5 449.7 L499.0 451.8 L499.5 452.0 L500.0 449.2 L500.5 448.0 L501.0 448.5 L501.5 446.9 L502.0 448.9 L502.5 447.9 L503.0 450.4 L503.5 448.0 L504.0 448.0 L504.5 445.4 L505.0 446.7 L505.5 446.7 L506.0 447.3 L506.5 447.3 L507.0 449.4 L507.5 449.3 L508.0 449.1 L508.5 449.5 L509.0 450.9 L509.5 449.8 L510.0 450.4 L510.5 450.0 L511.0 451.7 L511.5 451.2 L512.0 450.4 L512.5 448.9 L513.0 448.6 L513.5 446.4 L514.0 444.9 L514.5 445.6 L515.0 447.9 L515.5 445.9 L516.0 446.7 L516.5 447.3 L517.0 449.7 L517.5 446.9 L518.0 449.4 L518.5 448.9 L519.0 449.3 L519.5 448.1 L520.0 452.3 L520.5 452.3 L521.0 453.1 L521.5 451.4 L522.0 451.6 L522.5 447.8 L523.0 447.2 L523.5 447.1 L524.0 450.3 L524.5 450.7 L525.0 452.5 L525.5 453.7 L526.0 452.9 L526.5 451.4 L527.0 450.2 L527.5 450.8 L528.0 449.6 L528.5 448.7 L529.0 447.2 L529.5 450.1 L530.0 446.7 L530.5 446.9 L531.0 447.8 L531.5 449.0 L532.0 445.1 L532.5 448.1 L533.0 448.3 L533.5 447.4 L534.0 447.2 L534.5 446.9 L535.0 446.7 L535.5 448.9 L536.0 451.9 L536.5 453.5 L537.0 454.9 L537.5 454.5 L538.0 452.8 L538.5 452.8 L539.0 451.7 L539.5 451.7 L540.0 450.2 L540.5 449.7 L541.0 448.0 L541.5 447.2 L542.0 446.1 L542.5 447.5 L543.0 447.9 L543.5 446.8 L544.0 448.5 L544.5 449.3 L545.0 449.6 L545.5 451.0 L546.0 451.2 L546.5 450.3 L547.0 450.3 L547.5 449.5 L548.0 448.2 L548.5 446.9 L549.0 447.3 L549.5 446.0 L550.0 445.6 L550.5 446.2 L551.0 446.0 L551.5 447.1 L552.0 450.9 L552.5 453.0 L553.0 452.8 L553.5 454.9 L554.0 453.2 L554.5 453.6 L555.0 451.1 L555.5 450.3 L556.0 450.8 L556.5 450.5 L557.0 446.5 L557.5 448.0 L558.0 448.1 L558.5 445.4 L559.0 445.3 L559.5 445.9 L560.0 445.2 L560.5 445.7 L561.0 448.7 L561.5 447.9 L562.0 448.8 L562.5 448.4 L563.0 445.8 L563.5 445.6 L564.0 446.5 L564.5 446.3 L565.0 444.6 L565.5 447.1 L566.0 446.4 L566.5 447.7 L567.0 447.4 L567.5 451.6 L568.0 451.4 L568.5 450.8 L569.0 450.5 L569.5 451.8 L570.0 449.4 L570.5 450.3 L571.0 451.4 L571.5 451.8 L572.0 452.3 L572.5 456.0 L573.0 454.6 L573.5 453.5 L574.0 453.2 L574.5 451.8 L575.0 446.2 L575.5 448.6 L576.0 449.7 L576.5 447.3 L577.0 446.7 L577.5 449.5 L578.0 446.9 L578.5 445.9 L579.0 448.1 L579.5 450.0 L580.0 450.8 L580.5 451.5 L581.0 452.4 L581.5 450.3 L582.0 447.4 L582.5 446.2 L583.0 445.3 L583.5 445.0 L584.0 445.8 L584.5 446.8 L585.0 446.6 L585.5 444.7 L586.0 443.1 L586.5 444.7 L587.0 445.5 L587.5 444.4 L588.0 447.2 L588.5 450.6 L589.0 451.4 L589.5 450.0 L590.0 450.5 L590.5 448.0 L591.0 445.4 L591.5 442.3 L592.0 442.8 L592.5 443.8 L593.0 445.6 L593.5 446.0 L594.0 445.7 L594.5 447.7 L595.0 447.0 L595.5 445.8 L596.0 446.1 L596.5 449.2 L597.0 446.6 L597.5 447.5 L598.0 447.6 L598.5 448.6 L599.0 448.0 L599.5 449.3 L600.0 447.6 L600.5 447.4 L601.0 445.4 L601.5 445.6 L602.0 446.3 L602.5 447.4 L603.0 448.4 L603.5 449.3 L604.0 449.0 L604.5 445.8 L605.0 445.3 L605.5 446.0 L606.0 444.8 L606.5 443.6 L607.0 446.1 L607.5 445.2 L608.0 443.8 L608.5 443.4 L609.0 442.9 L609.5 443.0 L610.0 445.2 L610.5 446.4 L611.0 447.6 L611.5 447.8 L612.0 448.0 L612.5 446.6 L613.0 448.0 L613.5 448.3 L614.0 450.3 L614.5 450.6 L615.0 451.1 L615.5 450.1 L616.0 449.1 L616.5 448.8 L617.0 448.1 L617.5 447.2 L618.0 447.0 L618.5 449.0 L619.0 448.2 L619.5 445.7 L620.0 445.9 L620.5 445.9 L621.0 445.4 L621.5 444.4 L622.0 447.4 L622.5 448.9 L623.0 449.4 L623.5 446.8 L624.0 447.1 L624.5 445.9 L625.0 444.5 L625.5 443.8 L626.0 447.1 L626.5 447.7 L627.0 447.3 L627.5 446.4 L628.0 447.3 L628.5 444.9 L629.0 444.8 L629.5 447.7 L630.0 451.0 L630.5 452.0 L631.0 451.8 L631.5 454.1 L632.0 452.5 L632.5 452.1 L633.0 450.4 L633.5 453.1 L634.0 451.3 L634.5 451.5 L635.0 450.2 L635.5 449.2 L636.0 448.0 L636.5 449.0 L637.0 447.7 L637.5 448.0 L638.0 447.8 L638.5 446.4 L639.0 443.6 L639.5 447.0 L640.0 447.1 L640.5 447.9 L641.0 450.5 L641.5 449.9 L642.0 448.0 L642.5 447.1 L643.0 448.3 L643.5 445.5 L644.0 448.0 L644.5 447.9 L645.0 450.2 L645.5 448.9 L646.0 450.3 L646.5 450.7 L647.0 451.3 L647.5 450.3 L648.0 451.0 L648.5 449.9 L649.0 450.8 L649.5 452.4 L650.0 451.9 L650.5 451.0 L651.0 453.4 L651.5 450.8 L652.0 449.1 L652.5 447.1 L653.0 449.5 L653.5 446.9 L654.0 448.4 L654.5 447.4 L655.0 448.6 L655.5 445.5 L656.0 446.8 L656.5 445.1 L657.0 446.9 L657.5 446.4 L658.0 447.7 L658.5 448.6 L659.0 450.8 L659.5 450.7 L660.0 453.0 L660.5 453.6 L661.0 453.6 L661.5 453.8 L662.0 451.2 L662.5 450.0 L663.0 449.6 L663.5 448.6 L664.0 448.2 L664.5 448.6 L665.0 446.9 L665.5 446.2 L666.0 446.9 L666.5 445.2 L667.0 443.7 L667.5 446.8 L668.0 449.0 L668.5 449.1 L669.0 449.9 L669.5 452.4 L670.0 449.5 L670.5 446.8 L671.0 447.0 L671.5 446.8 L672.0 448.4 L672.5 449.6 L673.0 448.2 L673.5 447.5 L674.0 449.8 L674.5 448.8 L675.0 448.2 L675.5 450.0 L676.0 450.5 L676.5 447.7 L677.0 445.9 L677.5 446.9 L678.0 447.8 L678.5 446.2 L679.0 445.9 L679.5 447.9 L680.0 445.5 L680.5 444.7 L681.0 444.9 L681.5 448.2 L682.0 446.5 L682.5 449.5 L683.0 450.0 L683.5 452.0 L684.0 451.6 L684.5 452.5 L685.0 452.0 L685.5 451.1 L686.0 449.3 L686.5 448.5 L687.0 447.3 L687.5 446.1 L688.0 447.2 L688.5 447.3 L689.0 446.0 L689.5 445.0 L690.0 444.7 L690.5 444.4 L691.0 444.6 L691.5 445.1 L692.0 448.4 L692.5 451.2 L693.0 449.7 L693.5 448.5 L694.0 448.8 L694.5 445.0 L695.0 440.8 L695.5 440.7 L696.0 440.0 L696.5 437.4 L697.0 437.5 L697.5 436.6 L698.0 436.4 L698.5 437.0 L699.0 432.8 L699.5 429.4 L700.0 422.4 L700.5 421.0 L701.0 421.0 L701.5 421.0 L702.0 421.0 L702.5 421.0 L703.0 422.7 L703.5 430.9 L704.0 436.2 L704.5 436.8 L705.0 440.0 L705.5 444.2 L706.0 442.9 L706.5 443.9 L707.0 444.5 L707.5 445.8 L708.0 445.6 L708.5 446.7 L709.0 446.2 L709.5 447.8 L710.0 448.9 L710.5 450.2 L711.0 448.1 L711.5 447.3 L712.0 447.3 L712.5 445.8 L713.0 443.2 L713.5 447.5 L714.0 451.8 L714.5 450.7 L715.0 449.4 L715.5 450.8 L716.0 451.2 L716.5 449.1 L717.0 450.5 L717.5 452.4 L718.0 452.4 L718.5 451.0 L719.0 449.7 L719.5 449.0 L720.0 448.8 L720.5 448.6 L721.0 449.0 L721.5 448.8 L722.0 451.3 L722.5 451.0 L723.0 451.2 L723.5 452.7 L724.0 453.3 L724.5 451.8 L725.0 451.8 L725.5 449.9 L726.0 449.1 L726.5 447.4 L727.0 448.5 L727.5 449.1 L728.0 450.6 L728.5 448.2 L729.0 450.5 L729.5 448.7 L730.0 449.7 L730.5 449.6 L731.0 451.1 L731.5 450.3 L732.0 449.4 L732.5 445.7 L733.0 447.0 L733.5 447.3 L734.0 447.2 L734.5 447.8 L735.0 450.5 L735.5 448.5 L736.0 449.1 L736.5 449.6 L737.0 449.2 L737.5 447.7 L738.0 448.1 L738.5 446.4 L739.0 446.3 L739.5 446.3 L740.0 445.7 L740.5 444.6 L741.0 444.0 L741.5 444.0 L742.0 445.4 L742.5 443.2 L743.0 444.1 L743.5 442.4 L744.0 439.3 L744.5 434.4 L745.0 429.8 L745.5 421.3 L746.0 431.2 L746.5 439.6 L747.0 441.3 L747.5 439.7 L748.0 442.1 L748.5 440.9 L749.0 441.9 L749.5 446.0 L750.0 449.1 L750.5 447.7 L751.0 448.6 L751.5 447.7 L752.0 448.3 L752.5 446.2 L753.0 446.9 L753.5 448.0 L754.0 449.4 L754.5 448.9 L755.0 448.3 L755.5 447.2 L756.0 447.4 L756.5 447.3 L757.0 447.1 L757.5 447.1 L758.0 449.3 L758.5 447.9 L759.0 447.7 L759.5 449.0 L760.0 451.5 L760.5 448.7 L761.0 450.8 L761.5 450.6 L762.0 449.6 L762.5 449.8 L763.0 451.7 L763.5 450.0 L764.0 450.6 L764.5 446.5 L765.0 445.9 L765.5 447.3 L766.0 447.4 L766.5 446.2 L767.0 449.2 L767 480 Z" fill="#2549c0" opacity="0.9"/>
<path d="M131.0 447.4 L131.5 447.8 L132.0 448.0 L132.5 449.3 L133.0 449.1 L133.5 449.4 L134.0 450.4 L134.5 450.6 L135.0 450.3 L135.5 452.1 L136.0 449.9 L136.5 448.6 L137.0 447.4 L137.5 445.6 L138.0 444.9 L138.5 446.0 L139.0 444.8 L139.5 448.9 L140.0 451.7 L140.5 452.4 L141.0 453.0 L141.5 454.3 L142.0 452.5 L142.5 449.2 L143.0 446.3 L143.5 445.1 L144.0 445.6 L144.5 443.7 L145.0 444.5 L145.5 445.6 L146.0 448.1 L146.5 446.0 L147.0 447.4 L147.5 447.3 L148.0 449.0 L148.5 446.7 L149.0 448.3 L149.5 446.8 L150.0 448.8 L150.5 447.5 L151.0 448.3 L151.5 449.0 L152.0 450.6 L152.5 448.7 L153.0 447.4 L153.5 446.5 L154.0 445.5 L154.5 443.5 L155.0 446.9 L155.5 448.1 L156.0 449.3 L156.5 448.5 L157.0 448.0 L157.5 445.5 L158.0 447.3 L158.5 448.1 L159.0 449.5 L159.5 451.7 L160.0 451.9 L160.5 452.0 L161.0 451.8 L161.5 453.7 L162.0 454.6 L162.5 454.5 L163.0 451.6 L163.5 452.0 L164.0 449.3 L164.5 446.0 L165.0 444.9 L165.5 444.8 L166.0 444.5 L166.5 445.6 L167.0 447.4 L167.5 450.7 L168.0 451.3 L168.5 452.2 L169.0 452.3 L169.5 452.4 L170.0 450.2 L170.5 452.5 L171.0 450.4 L171.5 448.3 L172.0 447.9 L172.5 449.5 L173.0 446.4 L173.5 447.3 L174.0 450.9 L174.5 453.0 L175.0 452.6 L175.5 457.1 L176.0 457.0 L176.5 455.0 L177.0 451.2 L177.5 450.7 L178.0 448.8 L178.5 448.4 L179.0 448.3 L179.5 451.3 L180.0 451.5 L180.5 450.0 L181.0 449.6 L181.5 449.4 L182.0 445.7 L182.5 444.4 L183.0 446.2 L183.5 448.4 L184.0 446.3 L184.5 449.1 L185.0 449.2 L185.5 446.9 L186.0 446.4 L186.5 448.1 L187.0 448.3 L187.5 448.6 L188.0 448.1 L188.5 447.0 L189.0 447.7 L189.5 448.2 L190.0 447.6 L190.5 449.8 L191.0 449.7 L191.5 449.9 L192.0 449.3 L192.5 447.6 L193.0 448.7 L193.5 450.5 L194.0 450.0 L194.5 447.5 L195.0 449.5 L195.5 448.6 L196.0 443.3 L196.5 446.6 L197.0 448.2 L197.5 447.9 L198.0 445.9 L198.5 449.7 L199.0 447.5 L199.5 448.6 L200.0 449.8 L200.5 449.8 L201.0 450.2 L201.5 449.3 L202.0 449.0 L202.5 449.9 L203.0 451.2 L203.5 451.4 L204.0 454.2 L204.5 453.7 L205.0 452.9 L205.5 450.9 L206.0 452.2 L206.5 448.4 L207.0 447.2 L207.5 446.0 L208.0 449.4 L208.5 447.6 L209.0 447.1 L209.5 449.6 L210.0 449.5 L210.5 446.9 L211.0 448.9 L211.5 451.7 L212.0 452.0 L212.5 453.6 L213.0 453.8 L213.5 452.0 L214.0 451.0 L214.5 446.8 L215.0 445.7 L215.5 448.0 L216.0 446.7 L216.5 448.3 L217.0 451.0 L217.5 451.6 L218.0 450.3 L218.5 451.5 L219.0 451.2 L219.5 451.0 L220.0 451.0 L220.5 453.1 L221.0 453.8 L221.5 452.6 L222.0 453.8 L222.5 454.0 L223.0 452.3 L223.5 451.6 L224.0 452.4 L224.5 452.3 L225.0 451.7 L225.5 452.3 L226.0 453.2 L226.5 451.2 L227.0 449.6 L227.5 450.4 L228.0 447.7 L228.5 446.0 L229.0 447.0 L229.5 448.5 L230.0 447.3 L230.5 451.5 L231.0 452.7 L231.5 453.9 L232.0 451.9 L232.5 450.7 L233.0 447.8 L233.5 447.8 L234.0 446.8 L234.5 449.6 L235.0 448.6 L235.5 449.3 L236.0 449.8 L236.5 447.8 L237.0 446.9 L237.5 449.8 L238.0 448.1 L238.5 444.3 L239.0 444.7 L239.5 444.6 L240.0 445.8 L240.5 446.4 L241.0 450.9 L241.5 451.5 L242.0 453.2 L242.5 449.5 L243.0 449.5 L243.5 448.0 L244.0 449.9 L244.5 449.1 L245.0 450.4 L245.5 447.8 L246.0 446.9 L246.5 444.4 L247.0 443.3 L247.5 443.2 L248.0 445.5 L248.5 445.7 L249.0 447.5 L249.5 446.6 L250.0 449.4 L250.5 448.9 L251.0 448.8 L251.5 449.2 L252.0 450.0 L252.5 450.2 L253.0 450.9 L253.5 450.5 L254.0 451.3 L254.5 451.9 L255.0 449.2 L255.5 448.8 L256.0 449.6 L256.5 449.9 L257.0 450.3 L257.5 451.4 L258.0 449.0 L258.5 449.5 L259.0 446.4 L259.5 443.4 L260.0 442.4 L260.5 445.5 L261.0 444.8 L261.5 449.4 L262.0 451.1 L262.5 451.0 L263.0 452.2 L263.5 452.4 L264.0 448.7 L264.5 447.9 L265.0 448.8 L265.5 449.2 L266.0 449.8 L266.5 450.0 L267.0 452.1 L267.5 452.5 L268.0 449.1 L268.5 449.2 L269.0 450.3 L269.5 451.2 L270.0 450.9 L270.5 451.1 L271.0 451.1 L271.5 453.4 L272.0 450.6 L272.5 452.7 L273.0 454.3 L273.5 454.2 L274.0 451.2 L274.5 451.1 L275.0 450.4 L275.5 449.8 L276.0 449.3 L276.5 450.0 L277.0 449.5 L277.5 449.0 L278.0 450.1 L278.5 449.6 L279.0 448.1 L279.5 450.2 L280.0 449.9 L280.5 449.2 L281.0 449.8 L281.5 450.6 L282.0 448.1 L282.5 449.0 L283.0 450.6 L283.5 448.9 L284.0 451.5 L284.5 453.5 L285.0 451.5 L285.5 450.7 L286.0 453.9 L286.5 450.3 L287.0 452.1 L287.5 452.8 L288.0 451.3 L288.5 450.3 L289.0 450.7 L289.5 449.6 L290.0 450.2 L290.5 451.1 L291.0 448.5 L291.5 451.3 L292.0 452.8 L292.5 454.0 L293.0 454.3 L293.5 457.2 L294.0 455.7 L294.5 451.5 L295.0 449.0 L295.5 448.9 L296.0 446.6 L296.5 445.9 L297.0 448.5 L297.5 448.5 L298.0 446.7 L298.5 449.7 L299.0 450.8 L299.5 450.3 L300.0 451.5 L300.5 451.3 L301.0 449.6 L301.5 448.5 L302.0 450.8 L302.5 451.0 L303.0 452.8 L303.5 454.5 L304.0 455.3 L304.5 452.2 L305.0 450.7 L305.5 453.8 L306.0 451.1 L306.5 449.6 L307.0 450.0 L307.5 449.4 L308.0 446.4 L308.5 447.2 L309.0 447.9 L309.5 445.5 L310.0 444.6 L310.5 442.5 L311.0 443.2 L311.5 443.3 L312.0 443.0 L312.5 445.4 L313.0 448.6 L313.5 447.4 L314.0 447.3 L314.5 451.5 L315.0 448.3 L315.5 447.3 L316.0 448.5 L316.5 450.5 L317.0 449.1 L317.5 449.6 L318.0 449.7 L318.5 447.2 L319.0 444.7 L319.5 445.8 L320.0 446.7 L320.5 448.1 L321.0 450.4 L321.5 451.3 L322.0 450.3 L322.5 450.8 L323.0 449.5 L323.5 448.9 L324.0 447.5 L324.5 447.2 L325.0 450.5 L325.5 449.9 L326.0 450.7 L326.5 451.7 L327.0 452.5 L327.5 450.3 L328.0 448.7 L328.5 447.8 L329.0 447.0 L329.5 446.9 L330.0 445.1 L330.5 447.9 L331.0 446.9 L331.5 446.0 L332.0 446.7 L332.5 446.7 L333.0 447.5 L333.5 450.0 L334.0 451.4 L334.5 451.9 L335.0 452.0 L335.5 451.7 L336.0 450.4 L336.5 451.7 L337.0 450.2 L337.5 452.3 L338.0 452.0 L338.5 450.7 L339.0 449.3 L339.5 450.3 L340.0 451.1 L340.5 449.8 L341.0 451.1 L341.5 453.8 L342.0 450.7 L342.5 446.2 L343.0 447.4 L343.5 447.9 L344.0 446.7 L344.5 446.8 L345.0 450.1 L345.5 448.8 L346.0 447.8 L346.5 447.5 L347.0 450.7 L347.5 453.4 L348.0 451.2 L348.5 450.0 L349.0 447.7 L349.5 448.3 L350.0 444.4 L350.5 447.1 L351.0 449.0 L351.5 447.8 L352.0 447.3 L352.5 449.2 L353.0 448.3 L353.5 447.2 L354.0 449.6 L354.5 448.8 L355.0 448.1 L355.5 449.6 L356.0 448.8 L356.5 448.2 L357.0 447.8 L357.5 447.7 L358.0 446.0 L358.5 449.0 L359.0 450.4 L359.5 451.3 L360.0 451.7 L360.5 454.6 L361.0 452.6 L361.5 452.1 L362.0 452.1 L362.5 452.2 L363.0 448.5 L363.5 448.4 L364.0 449.1 L364.5 448.5 L365.0 447.4 L365.5 447.9 L366.0 448.2 L366.5 448.6 L367.0 449.2 L367.5 449.3 L368.0 449.5 L368.5 449.2 L369.0 446.1 L369.5 446.3 L370.0 447.8 L370.5 448.8 L371.0 449.9 L371.5 453.8 L372.0 452.6 L372.5 451.6 L373.0 452.7 L373.5 451.3 L374.0 450.0 L374.5 448.8 L375.0 449.7 L375.5 447.8 L376.0 448.6 L376.5 448.3 L377.0 447.8 L377.5 446.2 L378.0 447.5 L378.5 447.2 L379.0 446.2 L379.5 447.0 L380.0 446.9 L380.5 446.4 L381.0 446.4 L381.5 448.6 L382.0 449.9 L382.5 450.4 L383.0 448.2 L383.5 448.6 L384.0 448.0 L384.5 447.3 L385.0 449.6 L385.5 453.8 L386.0 455.0 L386.5 454.0 L387.0 456.8 L387.5 455.7 L388.0 451.7 L388.5 452.0 L389.0 450.6 L389.5 446.4 L390.0 446.7 L390.5 450.4 L391.0 449.0 L391.5 451.8 L392.0 454.6 L392.5 451.6 L393.0 450.2 L393.5 450.7 L394.0 448.4 L394.5 447.9 L395.0 449.3 L395.5 449.4 L396.0 448.7 L396.5 451.8 L397.0 451.2 L397.5 451.4 L398.0 449.2 L398.5 448.4 L399.0 448.7 L399.5 448.9 L400.0 450.3 L400.5 453.3 L401.0 452.5 L401.5 449.7 L402.0 448.7 L402.5 448.7 L403.0 446.5 L403.5 447.5 L404.0 447.3 L404.5 446.6 L405.0 445.2 L405.5 446.4 L406.0 446.0 L406.5 445.8 L407.0 447.1 L407.5 449.3 L408.0 449.5 L408.5 449.2 L409.0 450.7 L409.5 451.8 L410.0 450.2 L410.5 450.4 L411.0 451.2 L411.5 450.9 L412.0 448.3 L412.5 448.3 L413.0 449.6 L413.5 450.5 L414.0 452.0 L414.5 454.3 L415.0 454.0 L415.5 450.9 L416.0 451.8 L416.5 450.6 L417.0 447.5 L417.5 449.3 L418.0 452.3 L418.5 452.7 L419.0 454.2 L419.5 456.3 L420.0 454.6 L420.5 452.3 L421.0 451.9 L421.5 449.8 L422.0 452.4 L422.5 451.4 L423.0 453.2 L423.5 453.6 L424.0 454.2 L424.5 451.4 L425.0 450.9 L425.5 451.5 L426.0 451.0 L426.5 452.8 L427.0 452.6 L427.5 456.0 L428.0 455.2 L428.5 455.0 L429.0 453.5 L429.5 453.5 L430.0 451.2 L430.5 451.7 L431.0 450.5 L431.5 450.1 L432.0 450.8 L432.5 451.5 L433.0 451.8 L433.5 451.2 L434.0 451.5 L434.5 450.7 L435.0 450.2 L435.5 448.0 L436.0 447.0 L436.5 446.1 L437.0 445.0 L437.5 446.7 L438.0 445.8 L438.5 447.0 L439.0 447.7 L439.5 448.9 L440.0 448.7 L440.5 450.1 L441.0 449.0 L441.5 449.9 L442.0 449.9 L442.5 451.9 L443.0 450.9 L443.5 452.1 L444.0 450.9 L444.5 449.9 L445.0 447.2 L445.5 450.0 L446.0 452.6 L446.5 453.1 L447.0 454.4 L447.5 455.2 L448.0 455.0 L448.5 452.8 L449.0 451.6 L449.5 450.7 L450.0 449.3 L450.5 447.7 L451.0 448.9 L451.5 450.7 L452.0 450.3 L452.5 450.6 L453.0 451.1 L453.5 449.7 L454.0 448.6 L454.5 451.7 L455.0 451.2 L455.5 450.7 L456.0 450.7 L456.5 450.9 L457.0 448.7 L457.5 449.2 L458.0 447.9 L458.5 447.4 L459.0 447.4 L459.5 449.6 L460.0 448.3 L460.5 449.7 L461.0 451.4 L461.5 450.6 L462.0 449.3 L462.5 450.3 L463.0 448.7 L463.5 446.0 L464.0 446.6 L464.5 445.1 L465.0 444.6 L465.5 446.4 L466.0 447.3 L466.5 445.8 L467.0 446.0 L467.5 447.4 L468.0 444.6 L468.5 446.5 L469.0 447.6 L469.5 447.7 L470.0 446.6 L470.5 449.1 L471.0 446.9 L471.5 446.7 L472.0 447.7 L472.5 447.8 L473.0 448.0 L473.5 449.1 L474.0 446.6 L474.5 445.7 L475.0 445.7 L475.5 446.3 L476.0 445.4 L476.5 447.2 L477.0 446.7 L477.5 444.5 L478.0 444.4 L478.5 446.4 L479.0 447.2 L479.5 448.9 L480.0 452.2 L480.5 450.4 L481.0 449.5 L481.5 449.5 L482.0 450.2 L482.5 447.0 L483.0 446.4 L483.5 446.8 L484.0 446.1 L484.5 445.3 L485.0 447.6 L485.5 450.1 L486.0 450.7 L486.5 451.8 L487.0 451.5 L487.5 449.0 L488.0 449.5 L488.5 446.9 L489.0 446.5 L489.5 448.0 L490.0 447.9 L490.5 447.7 L491.0 448.3 L491.5 448.3 L492.0 444.9 L492.5 444.4 L493.0 444.1 L493.5 447.4 L494.0 448.5 L494.5 450.5 L495.0 453.1 L495.5 454.6 L496.0 454.0 L496.5 452.4 L497.0 451.2 L497.5 453.2 L498.0 450.8 L498.5 449.7 L499.0 451.8 L499.5 452.0 L500.0 449.2 L500.5 448.0 L501.0 448.5 L501.5 446.9 L502.0 448.9 L502.5 447.9 L503.0 450.4 L503.5 448.0 L504.0 448.0 L504.5 445.4 L505.0 446.7 L505.5 446.7 L506.0 447.3 L506.5 447.3 L507.0 449.4 L507.5 449.3 L508.0 449.1 L508.5 449.5 L509.0 450.9 L509.5 449.8 L510.0 450.4 L510.5 450.0 L511.0 451.7 L511.5 451.2 L512.0 450.4 L512.5 448.9 L513.0 448.6 L513.5 446.4 L514.0 444.9 L514.5 445.6 L515.0 447.9 L515.5 445.9 L516.0 446.7 L516.5 447.3 L517.0 449.7 L517.5 446.9 L518.0 449.4 L518.5 448.9 L519.0 449.3 L519.5 448.1 L520.0 452.3 L520.5 452.3 L521.0 453.1 L521.5 451.4 L522.0 451.6 L522.5 447.8 L523.0 447.2 L523.5 447.1 L524.0 450.3 L524.5 450.7 L525.0 452.5 L525.5 453.7 L526.0 452.9 L526.5 451.4 L527.0 450.2 L527.5 450.8 L528.0 449.6 L528.5 448.7 L529.0 447.2 L529.5 450.1 L530.0 446.7 L530.5 446.9 L531.0 447.8 L531.5 449.0 L532.0 445.1 L532.5 448.1 L533.0 448.3 L533.5 447.4 L534.0 447.2 L534.5 446.9 L535.0 446.7 L535.5 448.9 L536.0 451.9 L536.5 453.5 L537.0 454.9 L537.5 454.5 L538.0 452.8 L538.5 452.8 L539.0 451.7 L539.5 451.7 L540.0 450.2 L540.5 449.7 L541.0 448.0 L541.5 447.2 L542.0 446.1 L542.5 447.5 L543.0 447.9 L543.5 446.8 L544.0 448.5 L544.5 449.3 L545.0 449.6 L545.5 451.0 L546.0 451.2 L546.5 450.3 L547.0 450.3 L547.5 449.5 L548.0 448.2 L548.5 446.9 L549.0 447.3 L549.5 446.0 L550.0 445.6 L550.5 446.2 L551.0 446.0 L551.5 447.1 L552.0 450.9 L552.5 453.0 L553.0 452.8 L553.5 454.9 L554.0 453.2 L554.5 453.6 L555.0 451.1 L555.5 450.3 L556.0 450.8 L556.5 450.5 L557.0 446.5 L557.5 448.0 L558.0 448.1 L558.5 445.4 L559.0 445.3 L559.5 445.9 L560.0 445.2 L560.5 445.7 L561.0 448.7 L561.5 447.9 L562.0 448.8 L562.5 448.4 L563.0 445.8 L563.5 445.6 L564.0 446.5 L564.5 446.3 L565.0 444.6 L565.5 447.1 L566.0 446.4 L566.5 447.7 L567.0 447.4 L567.5 451.6 L568.0 451.4 L568.5 450.8 L569.0 450.5 L569.5 451.8 L570.0 449.4 L570.5 450.3 L571.0 451.4 L571.5 451.8 L572.0 452.3 L572.5 456.0 L573.0 454.6 L573.5 453.5 L574.0 453.2 L574.5 451.8 L575.0 446.2 L575.5 448.6 L576.0 449.7 L576.5 447.3 L577.0 446.7 L577.5 449.5 L578.0 446.9 L578.5 445.9 L579.0 448.1 L579.5 450.0 L580.0 450.8 L580.5 451.5 L581.0 452.4 L581.5 450.3 L582.0 447.4 L582.5 446.2 L583.0 445.3 L583.5 445.0 L584.0 445.8 L584.5 446.8 L585.0 446.6 L585.5 444.7 L586.0 443.1 L586.5 444.7 L587.0 445.5 L587.5 444.4 L588.0 447.2 L588.5 450.6 L589.0 451.4 L589.5 450.0 L590.0 450.5 L590.5 448.0 L591.0 445.4 L591.5 442.3 L592.0 442.8 L592.5 443.8 L593.0 445.6 L593.5 446.0 L594.0 445.7 L594.5 447.7 L595.0 447.0 L595.5 445.8 L596.0 446.1 L596.5 449.2 L597.0 446.6 L597.5 447.5 L598.0 447.6 L598.5 448.6 L599.0 448.0 L599.5 449.3 L600.0 447.6 L600.5 447.4 L601.0 445.4 L601.5 445.6 L602.0 446.3 L602.5 447.4 L603.0 448.4 L603.5 449.3 L604.0 449.0 L604.5 445.8 L605.0 445.3 L605.5 446.0 L606.0 444.8 L606.5 443.6 L607.0 446.1 L607.5 445.2 L608.0 443.8 L608.5 443.4 L609.0 442.9 L609.5 443.0 L610.0 445.2 L610.5 446.4 L611.0 447.6 L611.5 447.8 L612.0 448.0 L612.5 446.6 L613.0 448.0 L613.5 448.3 L614.0 450.3 L614.5 450.6 L615.0 451.1 L615.5 450.1 L616.0 449.1 L616.5 448.8 L617.0 448.1 L617.5 447.2 L618.0 447.0 L618.5 449.0 L619.0 448.2 L619.5 445.7 L620.0 445.9 L620.5 445.9 L621.0 445.4 L621.5 444.4 L622.0 447.4 L622.5 448.9 L623.0 449.4 L623.5 446.8 L624.0 447.1 L624.5 445.9 L625.0 444.5 L625.5 443.8 L626.0 447.1 L626.5 447.7 L627.0 447.3 L627.5 446.4 L628.0 447.3 L628.5 444.9 L629.0 444.8 L629.5 447.7 L630.0 451.0 L630.5 452.0 L631.0 451.8 L631.5 454.1 L632.0 452.5 L632.5 452.1 L633.0 450.4 L633.5 453.1 L634.0 451.3 L634.5 451.5 L635.0 450.2 L635.5 449.2 L636.0 448.0 L636.5 449.0 L637.0 447.7 L637.5 448.0 L638.0 447.8 L638.5 446.4 L639.0 443.6 L639.5 447.0 L640.0 447.1 L640.5 447.9 L641.0 450.5 L641.5 449.9 L642.0 448.0 L642.5 447.1 L643.0 448.3 L643.5 445.5 L644.0 448.0 L644.5 447.9 L645.0 450.2 L645.5 448.9 L646.0 450.3 L646.5 450.7 L647.0 451.3 L647.5 450.3 L648.0 451.0 L648.5 449.9 L649.0 450.8 L649.5 452.4 L650.0 451.9 L650.5 451.0 L651.0 453.4 L651.5 450.8 L652.0 449.1 L652.5 447.1 L653.0 449.5 L653.5 446.9 L654.0 448.4 L654.5 447.4 L655.0 448.6 L655.5 445.5 L656.0 446.8 L656.5 445.1 L657.0 446.9 L657.5 446.4 L658.0 447.7 L658.5 448.6 L659.0 450.8 L659.5 450.7 L660.0 453.0 L660.5 453.6 L661.0 453.6 L661.5 453.8 L662.0 451.2 L662.5 450.0 L663.0 449.6 L663.5 448.6 L664.0 448.2 L664.5 448.6 L665.0 446.9 L665.5 446.2 L666.0 446.9 L666.5 445.2 L667.0 443.7 L667.5 446.8 L668.0 449.0 L668.5 449.1 L669.0 449.9 L669.5 452.4 L670.0 449.5 L670.5 446.8 L671.0 447.0 L671.5 446.8 L672.0 448.4 L672.5 449.6 L673.0 448.2 L673.5 447.5 L674.0 449.8 L674.5 448.8 L675.0 448.2 L675.5 450.0 L676.0 450.5 L676.5 447.7 L677.0 445.9 L677.5 446.9 L678.0 447.8 L678.5 446.2 L679.0 445.9 L679.5 447.9 L680.0 445.5 L680.5 444.7 L681.0 444.9 L681.5 448.2 L682.0 446.5 L682.5 449.5 L683.0 450.0 L683.5 452.0 L684.0 451.6 L684.5 452.5 L685.0 452.0 L685.5 451.1 L686.0 449.3 L686.5 448.5 L687.0 447.3 L687.5 446.1 L688.0 447.2 L688.5 447.3 L689.0 446.0 L689.5 445.0 L690.0 444.7 L690.5 444.4 L691.0 444.6 L691.5 445.1 L692.0 448.4 L692.5 451.2 L693.0 449.7 L693.5 448.5 L694.0 448.8 L694.5 445.0 L695.0 440.8 L695.5 440.7 L696.0 440.0 L696.5 437.4 L697.0 437.5 L697.5 436.6 L698.0 436.4 L698.5 437.0 L699.0 432.8 L699.5 429.4 L700.0 422.4 L700.5 421.0 L701.0 421.0 L701.5 421.0 L702.0 421.0 L702.5 421.0 L703.0 422.7 L703.5 430.9 L704.0 436.2 L704.5 436.8 L705.0 440.0 L705.5 444.2 L706.0 442.9 L706.5 443.9 L707.0 444.5 L707.5 445.8 L708.0 445.6 L708.5 446.7 L709.0 446.2 L709.5 447.8 L710.0 448.9 L710.5 450.2 L711.0 448.1 L711.5 447.3 L712.0 447.3 L712.5 445.8 L713.0 443.2 L713.5 447.5 L714.0 451.8 L714.5 450.7 L715.0 449.4 L715.5 450.8 L716.0 451.2 L716.5 449.1 L717.0 450.5 L717.5 452.4 L718.0 452.4 L718.5 451.0 L719.0 449.7 L719.5 449.0 L720.0 448.8 L720.5 448.6 L721.0 449.0 L721.5 448.8 L722.0 451.3 L722.5 451.0 L723.0 451.2 L723.5 452.7 L724.0 453.3 L724.5 451.8 L725.0 451.8 L725.5 449.9 L726.0 449.1 L726.5 447.4 L727.0 448.5 L727.5 449.1 L728.0 450.6 L728.5 448.2 L729.0 450.5 L729.5 448.7 L730.0 449.7 L730.5 449.6 L731.0 451.1 L731.5 450.3 L732.0 449.4 L732.5 445.7 L733.0 447.0 L733.5 447.3 L734.0 447.2 L734.5 447.8 L735.0 450.5 L735.5 448.5 L736.0 449.1 L736.5 449.6 L737.0 449.2 L737.5 447.7 L738.0 448.1 L738.5 446.4 L739.0 446.3 L739.5 446.3 L740.0 445.7 L740.5 444.6 L741.0 444.0 L741.5 444.0 L742.0 445.4 L742.5 443.2 L743.0 444.1 L743.5 442.4 L744.0 439.3 L744.5 434.4 L745.0 429.8 L745.5 421.3 L746.0 431.2 L746.5 439.6 L747.0 441.3 L747.5 439.7 L748.0 442.1 L748.5 440.9 L749.0 441.9 L749.5 446.0 L750.0 449.1 L750.5 447.7 L751.0 448.6 L751.5 447.7 L752.0 448.3 L752.5 446.2 L753.0 446.9 L753.5 448.0 L754.0 449.4 L754.5 448.9 L755.0 448.3 L755.5 447.2 L756.0 447.4 L756.5 447.3 L757.0 447.1 L757.5 447.1 L758.0 449.3 L758.5 447.9 L759.0 447.7 L759.5 449.0 L760.0 451.5 L760.5 448.7 L761.0 450.8 L761.5 450.6 L762.0 449.6 L762.5 449.8 L763.0 451.7 L763.5 450.0 L764.0 450.6 L764.5 446.5 L765.0 445.9 L765.5 447.3 L766.0 447.4 L766.5 446.2 L767.0 449.2" fill="none" stroke="#3d70f8" stroke-width="1.5"/>
<defs><linearGradient id="pk" x1="0" y1="0" x2="0" y2="1"><stop offset="0" stop-color="#c8d4a8"/><stop offset="0.5" stop-color="#7898e0"/><stop offset="1" stop-color="#3b6ef5"/></linearGradient></defs>
<path d="M698.5 452 Q700.3 430 700.6 384 L702.4 384 Q702.7 430 704.5 452 Z" fill="url(#pk)"/>
<line x1="139" y1="437" x2="767" y2="437" stroke="#8a9a30" stroke-width="1.3" stroke-dasharray="2 3"/>
<line x1="139" y1="450.5" x2="767" y2="450.5" stroke="#e8e030" stroke-width="1.5" stroke-dasharray="4 3"/>
<rect x="763.5" y="226" width="3" height="469" fill="#30e030"/>
</svg>
<svg class="a" style="left:131px;top:500px" width="636" height="195" viewBox="0 0 636 195">
<defs><filter id="nz" x="0" y="0" width="100%" height="100%" color-interpolation-filters="sRGB"><feTurbulence type="fractalNoise" baseFrequency="0.45" numOctaves="2" seed="4"/><feColorMatrix type="matrix" values="0 0 0 0 0  0.4 0 0 0 -0.17  0 0 1.1 0 0.17  0 0 0 0 1"/></filter></defs>
<rect width="636" height="195" fill="#0a18c0"/>
<rect width="636" height="195" filter="url(#nz)" opacity="1"/>
<line x1="0" y1="7.5" x2="636" y2="7.5" stroke="#3a8cff" stroke-width="1.3" opacity="0.45" stroke-dasharray="130 5 70 4 100 6"/>
<line x1="0" y1="35.5" x2="636" y2="35.5" stroke="#3a8cff" stroke-width="1.3" opacity="0.45" stroke-dasharray="130 5 70 4 100 6"/>
<line x1="0" y1="63.5" x2="636" y2="63.5" stroke="#3a8cff" stroke-width="1.3" opacity="0.45" stroke-dasharray="130 5 70 4 100 6"/>
<line x1="0" y1="91.5" x2="636" y2="91.5" stroke="#3a8cff" stroke-width="1.3" opacity="0.45" stroke-dasharray="130 5 70 4 100 6"/>
<line x1="0" y1="119.5" x2="636" y2="119.5" stroke="#3a8cff" stroke-width="1.3" opacity="0.45" stroke-dasharray="130 5 70 4 100 6"/>
<line x1="0" y1="147.5" x2="636" y2="147.5" stroke="#3a8cff" stroke-width="1.3" opacity="0.45" stroke-dasharray="130 5 70 4 100 6"/>
<line x1="0" y1="175.5" x2="636" y2="175.5" stroke="#3a8cff" stroke-width="1.3" opacity="0.45" stroke-dasharray="130 5 70 4 100 6"/>
<rect x="569.5" y="0" width="2" height="195" fill="#50f0e0"/>
<rect x="632.5" y="0" width="3" height="195" fill="#30e030"/>
<rect x="614" y="2" width="1.2" height="40" fill="#60c8ff" opacity="0.8"/>
<rect x="614" y="110" width="1.2" height="85" fill="#60c8ff" opacity="0.8"/>
<rect x="437" y="80" width="1.2" height="115" fill="#5aa0ff" opacity="0.6" stroke-dasharray="4 4"/>
<rect x="551" y="85" width="1.2" height="15" fill="#5aa0ff" opacity="0.6"/>
<rect x="551" y="125" width="1.2" height="15" fill="#5aa0ff" opacity="0.6"/>
<rect x="80.5" y="150" width="2.5" height="45" fill="#40e060"/>
<rect x="82" y="152" width="3" height="4" fill="#50e070"/><rect x="82" y="160" width="2.5" height="6" fill="#40d060"/><rect x="84" y="154" width="3" height="2" fill="#60c0a0"/><rect x="82" y="183" width="3.5" height="8" fill="#50e070"/><rect x="85" y="186" width="3" height="3" fill="#60c0a0"/>
<rect x="0" y="191.5" width="636" height="1.2" fill="#3070ff" opacity="0.5"/>
<rect x="133" y="150" width="1" height="45" fill="#c0e0ff" opacity="0.9"/>
<rect x="148.5" y="150" width="1.5" height="45" fill="#40e0c0"/>
<rect x="241" y="150" width="1.5" height="20" fill="#40a0ff" opacity="0.6"/>
</svg>
<div class="a" style="left:142px;top:159px;font-size:12px;line-height:12px;color:#a8ee00;white-space:nowrap;">60</div>
<div class="a" style="left:131px;top:163px;font-size:12px;line-height:12px;color:#3aa070;white-space:nowrap;width:6px;overflow:hidden;direction:rtl">0</div>
<div class="a" style="left:141px;top:292px;font-size:12px;line-height:12px;color:#3aa070;white-space:nowrap;">-83</div>
<div class="a" style="left:135px;top:363px;font-size:12px;line-height:12px;color:#3aa070;white-space:nowrap;">-103</div>
<div class="a" style="left:601px;top:163px;font-size:12px;line-height:12px;color:#3aa070;white-space:nowrap;">14.240</div>
<div class="a" style="left:729px;top:163px;font-size:12px;line-height:12px;color:#3aa070;white-space:nowrap;">14.260</div>
<div class="a" style="left:601px;top:486px;font-size:12px;line-height:12px;color:#3aa070;white-space:nowrap;">14.240</div>
<div class="a" style="left:729px;top:486px;font-size:12px;line-height:12px;color:#3aa070;white-space:nowrap;">14.260</div>
<div class="a" style="left:131px;top:487px;font-size:12px;line-height:12px;color:#3aa070;white-space:nowrap;width:6px;overflow:hidden;direction:rtl">0</div>
<svg class="a" style="left:600px;top:170px" width="100" height="30"><g fill="#2030b0" stroke="#2030b0"><circle cx="19.6" cy="7.4" r="1.8"/><circle cx="51.2" cy="7.4" r="1.8"/><circle cx="82.9" cy="7.4" r="1.8"/><line x1="19.6" y1="7" x2="19.6" y2="27" stroke-width="1.2"/><line x1="51.2" y1="7" x2="51.2" y2="27" stroke-width="1.2"/><line x1="82.9" y1="7" x2="82.9" y2="27" stroke-width="1.2"/></g></svg>
<div class="a" style="left:606px;top:196.5px;width:28px;height:14px;background:#c8c8c8;color:#1a1a1a;font-size:12px;line-height:14px;white-space:nowrap;padding-left:1px">TOM</div>
<div class="a" style="left:650.5px;top:196.5px;width:35px;height:14px;background:#0c0c96;color:#fff;font-size:12px;line-height:14px;white-space:nowrap;padding-left:1px">AK9IT</div>
<div class="a" style="left:619px;top:212px;width:39.5px;height:14px;background:#c8c8c8;color:#1a1a1a;font-size:12px;line-height:14px;white-space:nowrap;padding-left:1px">FH4KS</div>
<div class="a" style="left:681.5px;top:212px;width:46px;height:14px;background:#0c0c96;color:#fff;font-size:12px;line-height:14px;white-space:nowrap;padding-left:1px">EA5IWT</div>
<div class="a" style="left:619px;top:227px;width:47.5px;height:14px;background:#0c0c96;color:#fff;font-size:12px;line-height:14px;white-space:nowrap;padding-left:1px">KE2ABZ</div>
</div><!--endpan-->
<div id="dlgs"><!-- red VFO A sliver -->
<div class="a" style="left:280px;top:60.3px;font-size:13px;font-weight:bold;color:#ff1010;line-height:18px">VFO A</div>
<!-- ===== Wave File Controls ===== -->
<div class="dlg" style="left:190px;top:67px;width:416px;height:499px">
  <div class="a" style="left:0;top:0;width:414px;height:29px;background:#fff"></div>
  <div class="a" style="left:0;top:29px;width:414px;height:24px;background:linear-gradient(90deg,#f2f2f2,#f9f9f9 70%,#fbfbfb)"></div>
</div>
<svg class="a" style="left:198px;top:73px" width="16" height="16" viewBox="0 0 16 16"><defs><linearGradient id="ig" x1="0" y1="0" x2="0" y2="1"><stop offset="0" stop-color="#2f7a8c"/><stop offset="1" stop-color="#cfe6ee"/></linearGradient></defs><rect x="0" y="0" width="16" height="11.5" fill="url(#ig)"/><rect x="0" y="11.5" width="16" height="4.5" fill="#f4f4f4"/><path d="M0.5 0.6 H15.4 V15.5" fill="none" stroke="#111" stroke-width="1.1"/><path d="M1 10.6 H6.5 V1.8 H9.2 M11 1.8 H12.6 V9.6" fill="none" stroke="#0c1670" stroke-width="1.3"/><path d="M0.5 12.7 H3 M4 12.7 H6.5 M8 12.7 H10.5 M12 12.7 H14.5" stroke="#333" stroke-width="1"/></svg>
<div class="dt" style="left:219px;top:74px;line-height:14px">Wave File Controls</div>
<svg class="a" style="left:480px;top:70px" width="120" height="22"><line x1="7" y1="11.5" x2="17" y2="11.5" stroke="#9a9a9a" stroke-width="1"/><rect x="52.5" y="6.5" width="9" height="9" fill="none" stroke="#9a9a9a"/><path d="M98 6 L108 16 M108 6 L98 16" stroke="#9a9a9a" stroke-width="1.1"/></svg>
<div class="tx" style="left:205px;top:102.5px;font-size:12px">Options</div>

<div class="gb" style="left:202px;top:141px;width:304px;height:80px"></div>
<div class="gl" style="left:209px;top:134.5px">Playback</div>
<div class="tx" style="left:220px;top:159px">Currently Playing</div>
<div class="a" style="left:306px;top:158px;width:184px;height:20px;border:1px solid #828282;box-shadow:inset 1px 1px 0 #fff,inset -1px -1px 0 #fff"></div>
<div class="pbd" style="left:235px;top:191px;width:38px;height:21px;line-height:19px">Stop</div>
<div class="pbd" style="left:283px;top:191px;width:38px;height:21px;line-height:19px">Play</div>
<div class="pbd" style="left:331px;top:191px;width:46px;height:21px;line-height:19px">Pause</div>
<div class="pbd" style="left:387px;top:191px;width:38px;height:21px;line-height:19px">Prev</div>
<div class="pbd" style="left:435px;top:191px;width:38px;height:21px;line-height:19px">Next</div>

<div class="gb" style="left:514px;top:140.5px;width:88px;height:56.5px"></div>
<div class="gl" style="left:521px;top:134px">Record</div>
<div class="pb" style="left:531px;top:159px;width:54px;height:22px;line-height:20px;font-size:11.5px">Record</div>

<div class="gb" style="left:514px;top:212px;width:88px;height:72px"></div>
<div class="gl" style="left:521px;top:205.5px">TX Gain (dB)</div>
<div class="a" style="left:530px;top:230px;width:40px;height:20px;background:#fff;border:1px solid #a0a0a0"></div>
<div class="tx" style="left:532px;top:233px">-5</div>
<svg class="a" style="left:553px;top:231.5px" width="15" height="17"><rect x="0.5" y="0.5" width="14" height="7.5" fill="#e6e6e6" stroke="#b4b4b4"/><rect x="0.5" y="8.5" width="14" height="7.5" fill="#e6e6e6" stroke="#b4b4b4"/><path d="M4.5 5.5 L7.5 2.5 L10.5 5.5 Z M4.5 11 L7.5 14 L10.5 11 Z" fill="#111"/></svg>
<div class="a" style="left:527px;top:257px;width:62px;height:4px;background:#e7eaea;border:1px solid #d6d6d6"></div>
<svg class="a" style="left:552px;top:254px" width="8" height="11"><path d="M0.5 0.5 H6.5 V7 L3.5 10 L0.5 7 Z" fill="#0078d7"/></svg>
<svg class="a" style="left:526px;top:265px" width="66" height="6"><path d="M3.5 0 V4 M17.5 0 V4 M32.5 0 V4 M46.5 0 V4 M60.5 0 V4" stroke="#c4c4c4"/></svg>
<div class="pb" style="left:523px;top:351px;width:70px;height:22px;line-height:20px;font-size:11.5px">Quick Rec</div>
<div class="pbd" style="left:523px;top:383px;width:70px;height:22px;line-height:20px;font-size:11.5px">Quick Play</div>

<div class="gb" style="left:202px;top:237px;width:304px;height:176px"></div>
<div class="gl" style="left:209px;top:230px">Playlist</div>
<div class="pb" style="left:227px;top:255px;width:46px;height:21px;line-height:17px;border:2px solid #0078d7;background:#e1e1e1">Add...</div>
<div class="pbd" style="left:283px;top:255px;width:54px;height:21px;line-height:19px">Remove</div>
<div class="pbd" style="left:379px;top:255px;width:38px;height:21px;line-height:19px">Loop</div>
<div class="a" style="left:218px;top:286px;width:272px;height:108px;background:#fff;border:1px solid #828790"></div>
<div class="a" style="left:202px;top:418px;width:392px;height:62px;background:#fff;border:1px solid #7a7a7a"></div>

<!-- ===== Wave Record Options ===== -->
<div class="dlg" style="left:136px;top:420px;width:404px;height:231px">
  <div class="a" style="left:0;top:0;width:402px;height:28px;background:#fff"></div>
</div>
<svg class="a" style="left:144px;top:426px" width="16" height="16" viewBox="0 0 16 16"><rect x="0" y="0" width="16" height="11.5" fill="url(#ig)"/><rect x="0" y="11.5" width="16" height="4.5" fill="#f4f4f4"/><path d="M0.5 0.6 H15.4 V15.5" fill="none" stroke="#111" stroke-width="1.1"/><path d="M1 10.6 H6.5 V1.8 H9.2 M11 1.8 H12.6 V9.6" fill="none" stroke="#0c1670" stroke-width="1.3"/><path d="M0.5 12.7 H3 M4 12.7 H6.5 M8 12.7 H10.5 M12 12.7 H14.5" stroke="#333" stroke-width="1"/></svg>
<div class="dt" style="left:165px;top:427px;line-height:14px">Wave Record Options</div>
<svg class="a" style="left:413px;top:423px" width="120" height="22"><line x1="7" y1="11.5" x2="17" y2="11.5" stroke="#9a9a9a" stroke-width="1"/><rect x="52.5" y="6.5" width="9" height="9" fill="none" stroke="#9a9a9a"/><path d="M98 6 L108 16 M108 6 L98 16" stroke="#9a9a9a" stroke-width="1.1"/></svg>

<div class="gb" style="left:144px;top:464px;width:168px;height:73px"></div>
<div class="gl" style="left:151px;top:458.5px">When Receiving, Record ...</div>
<div class="rd" style="left:160px;top:487px"></div>
<div class="tx" style="left:177px;top:488px">Receiver Input I/Q</div>
<div class="rd on" style="left:160px;top:511px"></div>
<div class="tx" style="left:177px;top:512px">Receiver Output Audio</div>

<div class="gb" style="left:144px;top:566px;width:168px;height:73px"></div>
<div class="gl" style="left:151px;top:560.5px;font-size:10.7px">When Transmitting, Record ...</div>
<div class="rd" style="left:160px;top:588px"></div>
<div class="tx" style="left:177px;top:589px">MIC Audio</div>
<div class="rd on" style="left:160px;top:612px"></div>
<div class="tx" style="left:177px;top:613px">Transmitter Output I/Q</div>

<div class="gb" style="left:343px;top:464px;width:168px;height:99px"></div>
<div class="gl" style="left:350px;top:458px">Bit Depth</div>
<div class="rd on" style="left:358px;top:474px"></div><div class="tx" style="left:375px;top:474px">32-Bit IEEE Floats *</div>
<div class="rd" style="left:358px;top:491.5px"></div><div class="tx" style="left:375px;top:491.5px">32-Bit Signed PCM</div>
<div class="rd" style="left:358px;top:509px"></div><div class="tx" style="left:375px;top:509px">24-Bit Signed PCM</div>
<div class="rd" style="left:358px;top:526px"></div><div class="tx" style="left:375px;top:526px">16-Bit Signed PCM</div>
<div class="rd" style="left:358px;top:543px"></div><div class="tx" style="left:375px;top:543px">8-Bit UnSigned PCM</div>

<div class="gb" style="left:319px;top:577px;width:95px;height:48px"></div>
<div class="gl" style="left:325px;top:571px">Sample Rate</div>
<div class="a" style="left:334px;top:594px;width:64px;height:21px;background:#e5e5e5;border:1px solid #adadad"></div>
<div class="tx" style="left:338px;top:598px">48000</div>
<svg class="a" style="left:382px;top:600px" width="12" height="8"><path d="M1 1.5 L6 6.5 L11 1.5" fill="none" stroke="#333" stroke-width="1.1"/></svg>

<div class="gb" style="left:432px;top:577px;width:95px;height:61px"></div>
<div class="gl" style="left:438px;top:571px">Dither</div>
<div class="a" style="left:437px;top:591px;width:13px;height:13px;background:#fff;border:1px solid #333"></div>
<div class="tx" style="left:455px;top:591px">Enable</div>
<div class="a" style="left:437px;top:611px;width:40px;height:20px;background:#fff;border:1px solid #a0a0a0"></div>
<div class="tx" style="left:439px;top:614px">0.8</div>
<svg class="a" style="left:460px;top:612.5px" width="15" height="17"><rect x="0.5" y="0.5" width="14" height="7.5" fill="#e6e6e6" stroke="#b4b4b4"/><rect x="0.5" y="8.5" width="14" height="7.5" fill="#e6e6e6" stroke="#b4b4b4"/><path d="M4.5 5.5 L7.5 2.5 L10.5 5.5 Z M4.5 11 L7.5 14 L10.5 11 Z" fill="#111"/></svg>

<!-- annotations -->
<div class="circ" style="left:128.5px;top:2px;width:35px;height:35px;line-height:35px">1</div>
<div class="redbox" style="left:124px;top:39px;width:50px;height:27px"></div>
<div class="circ" style="left:264px;top:91px">2</div>
<div class="redbox" style="left:185px;top:91px;width:71px;height:36px"></div>
<div class="circ" style="left:294px;top:602px">3</div>
<div class="redbox" style="left:141px;top:599px;width:161px;height:43px"></div>
</div><!--enddlg-->
</body></html>
